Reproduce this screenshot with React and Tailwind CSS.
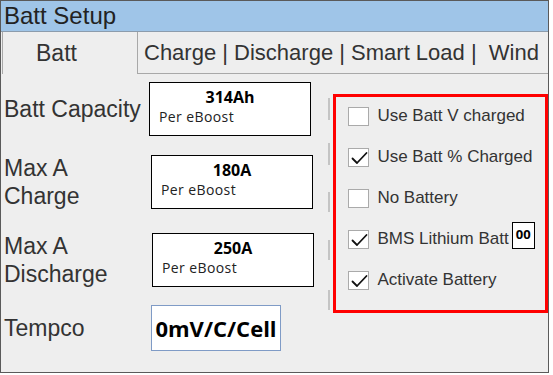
const Check = () => (
  <svg width="21" height="19" viewBox="0 0 21 19" className="block">
    <path d="M3.5 9.5 L8 14 L17.5 4" fill="none" stroke="#111" strokeWidth="1.8" strokeLinecap="round" strokeLinejoin="round" />
  </svg>
);

const CheckRow = ({ checked, label, extra }) => (
  <div className="h-[20px] flex items-center">
    <div className="w-[21px] h-[19px] bg-white border border-[#aaaaaa] shrink-0">
      {checked && <Check />}
    </div>
    <span className="ml-[8px] text-[17px] text-[#333] whitespace-nowrap">{label}</span>
    {extra}
  </div>
);

const ValueBox = ({ value, className }) => (
  <div className={`h-[54px] w-[162px] bg-white border border-black font-['Open_Sans',sans-serif] ${className}`}>
    <div className="text-center text-[16px] font-bold leading-[20px] pt-[4px] text-black">{value}</div>
    <div className="pl-[9px] text-[14px] leading-[20px] text-[#222] tracking-[0.4px] whitespace-pre">Per eBoost</div>
  </div>
);

export default function App() {
  return (
    <div className="w-[553px] h-[375px] bg-white">
      <div className="w-[549px] h-[373px] border border-[#5a5a5a] bg-[#eeeeee] flex flex-col font-['Liberation_Sans',Arial,sans-serif] text-[#333]">
        {/* title */}
        <div className="h-[31px] bg-[#9fc5e8] border-b border-[#8c9cac] pl-[3px] text-[24px] leading-[30px] text-[#222]">
          Batt Setup
        </div>

        {/* tabs */}
        <div className="h-[42px] flex">
          <div className="w-[136px] ml-[1px] border-l border-r border-[#a8a8a8] flex items-center pl-[33px] text-[23px]">
            Batt
          </div>
          <div className="flex-1 border-b border-[#a8a8a8] flex items-center pl-[6px] text-[22px] whitespace-pre">
            Charge | Discharge | Smart Load |  Wind
          </div>
        </div>

        {/* content */}
        <div className="flex-1 flex">
          <div className="w-[328px] flex flex-col">
            <div className="flex items-center mt-[8px]">
              <div className="w-[148px] pl-[3px] text-[23px] leading-[28px]">Batt Capacity</div>
              <ValueBox value="314Ah" />
            </div>
            <div className="flex items-center mt-[18px]">
              <div className="w-[150px] pl-[3px] text-[23px] leading-[28px]">
                Max A<br />Charge
              </div>
              <ValueBox value="180A" />
            </div>
            <div className="flex items-center mt-[22px]">
              <div className="w-[151px] pl-[3px] text-[23px] leading-[28px]">
                Max A<br />Discharge
              </div>
              <ValueBox value="250A" />
            </div>
            <div className="flex items-center mt-[17px]">
              <div className="w-[150px] pl-[3px] text-[23px] leading-[28px]">Tempco</div>
              <div className="w-[130px] h-[46px] bg-white border border-[#7f9bc6] flex items-center justify-center font-['Open_Sans',sans-serif] font-bold text-[22px] text-black">
                0mV/C/Cell
              </div>
            </div>
          </div>

          {/* splitter */}
          <div className="w-[2px] flex flex-col">
            <div className="mt-[24px] h-[22px] bg-[#c4c4c4]" />
            <div className="mt-[23px] h-[22px] bg-[#c4c4c4]" />
            <div className="mt-[27px] h-[20px] bg-[#c4c4c4]" />
            <div className="mt-[28px] h-[20px] bg-[#c4c4c4]" />
            <div className="mt-[30px] h-[20px] bg-[#c4c4c4]" />
          </div>

          {/* options */}
          <div className="ml-[3px] mt-[20px] w-[215px] h-[219px] border-[3px] border-[#ff0000] pl-[12px] pt-[9px] flex flex-col gap-[21px]">
            <CheckRow label="Use Batt V charged" />
            <CheckRow checked label="Use Batt % Charged" />
            <CheckRow label="No Battery" />
            <CheckRow
              checked
              label="BMS Lithium Batt"
              extra={
                <div className="ml-[3px] mb-[8px] w-[23px] h-[27px] bg-white border border-black flex items-center justify-center font-['Open_Sans',sans-serif] font-bold text-[13px] text-black">
                  00
                </div>
              }
            />
            <CheckRow checked label="Activate Battery" />
          </div>
        </div>
      </div>
    </div>
  );
}
